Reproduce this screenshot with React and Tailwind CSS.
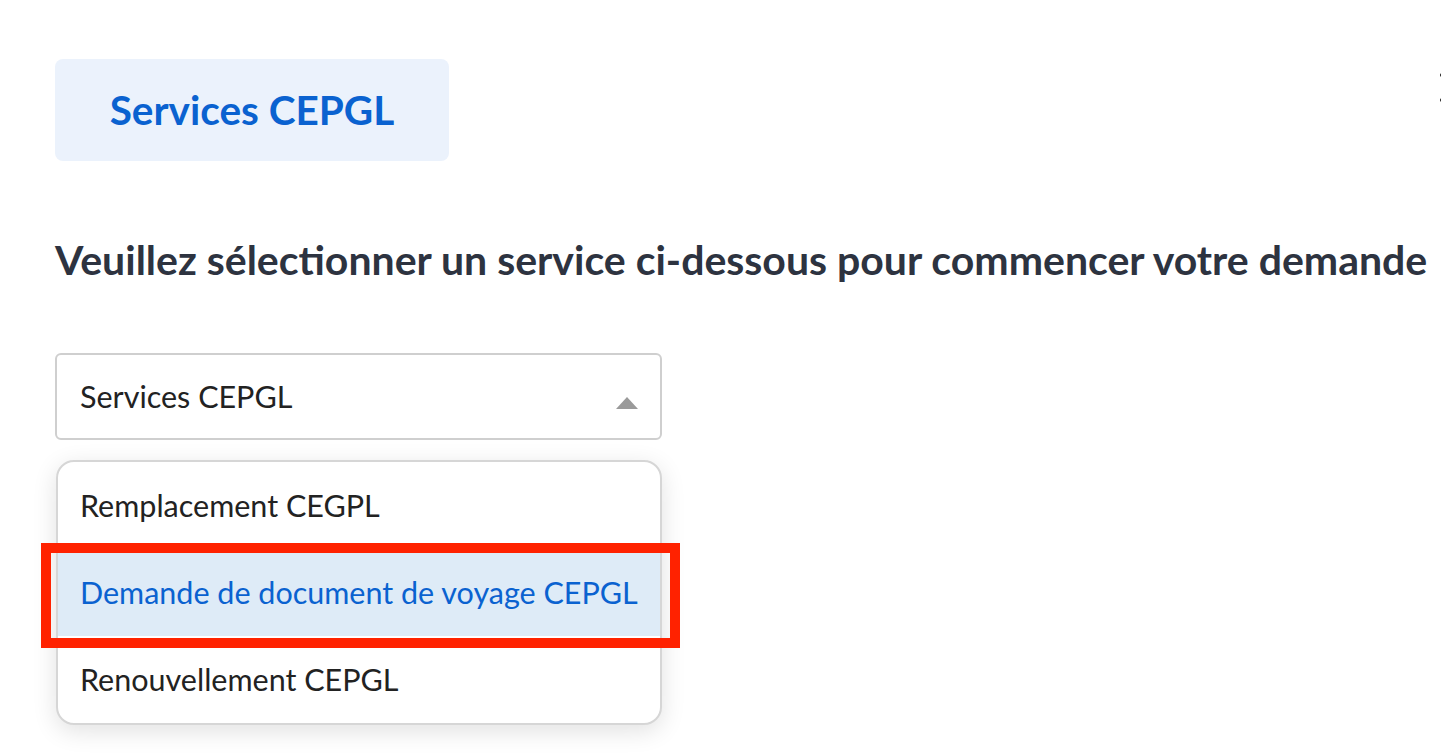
import { useState } from 'react';

const services = [
	'Remplacement CEGPL',
	'Demande de document de voyage CEPGL',
	'Renouvellement CEPGL',
];

export default function App() {
	const [active] = useState(1);

	return (
		<div className="relative h-[755px] w-[1441px] overflow-hidden bg-white font-['Lato',sans-serif]">
			<div className="flex items-start pl-[55px] pt-[59px]">
				<div className="flex h-[102px] w-[394px] items-center justify-center rounded-lg bg-[#ebf2fc]">
					<h1 className="text-[40.5px] font-bold text-[#0a62d0]">Services CEPGL</h1>
				</div>
				<div className="ml-auto mr-[-3px] mt-[14px] flex flex-col gap-[21px]">
					<span className="block h-[4px] w-[4px] rounded-full bg-[#222]"></span>
					<span className="block h-[4px] w-[4px] rounded-full bg-[#222]"></span>
				</div>
			</div>

			<p className="mt-[75px] whitespace-nowrap pl-[55px] text-[41px] font-bold leading-[48px] text-[#2d3340]">
				Veuillez sélectionner un service ci-dessous pour commencer votre demande
			</p>

			<div className="mt-[69px] pl-[55px]">
				<div className="flex h-[87px] w-[607px] items-center justify-between rounded-md border-2 border-[#cfcfcf] pl-[23px] pr-[22px]">
					<span className="text-[30.5px] text-[#222]">Services CEPGL</span>
					<svg width="22" height="12" viewBox="0 0 22 12" className="mt-[12px]">
						<polygon points="11,0 22,12 0,12" fill="#9a9a9a" />
					</svg>
				</div>

				<ul className="ml-[1px] mt-[20px] w-[606px] overflow-hidden rounded-[18px] border-2 border-[#d6d6d6] bg-white shadow-[0_6px_24px_rgba(0,0,0,0.12)]">
					{services.map((s, i) => (
						<li
							key={s}
							className={
								i === active
									? 'flex h-[87px] items-center bg-[#deebf7] pl-[22px] text-[30.5px] text-[#0a62d0]'
									: 'flex h-[87px] items-center pl-[22px] text-[30.5px] text-[#222]'
							}
						>
							{s}
						</li>
					))}
				</ul>
			</div>

			<div className="pointer-events-none absolute left-[41px] top-[543px] h-[105px] w-[639px] border-[10px] border-[#ff2200]"></div>
		</div>
	);
}
